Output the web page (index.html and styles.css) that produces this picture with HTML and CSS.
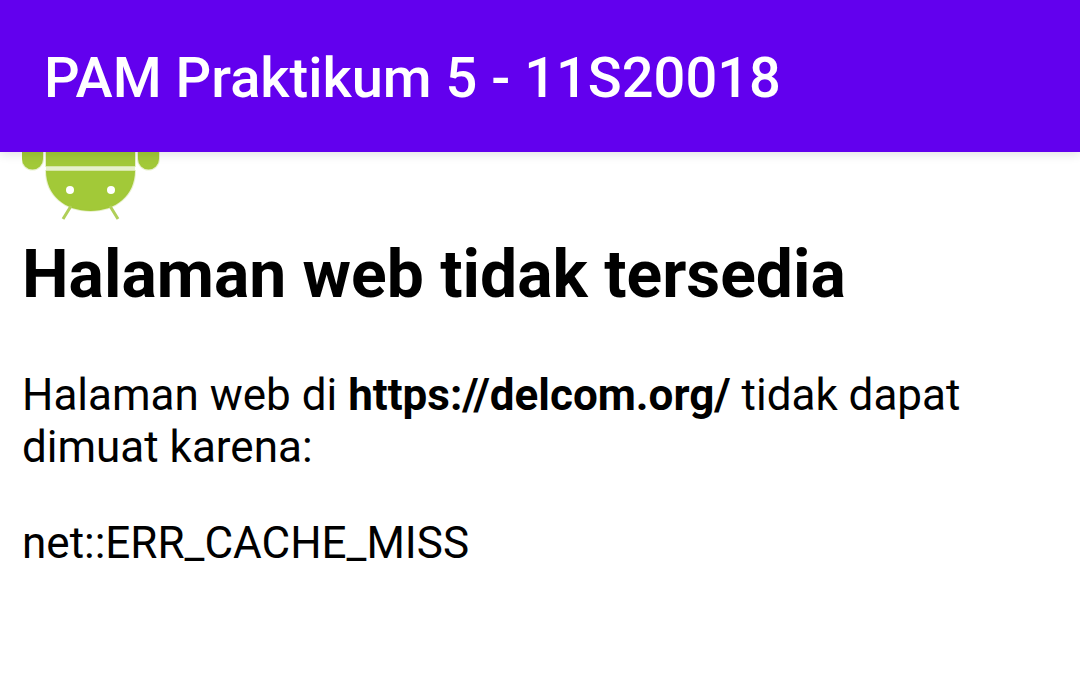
FILE: index.html
```html
<!DOCTYPE html>
<html lang="id">
<head>
<meta charset="utf-8">
<meta name="viewport" content="width=device-width, initial-scale=1">
<title>PAM Praktikum 5 - 11S20018</title>
<link rel="stylesheet" href="styles.css">
</head>
<body>
<header class="app-bar">
  <div class="app-title">PAM Praktikum 5 - 11S20018</div>
</header>
<main class="error-page">
  <svg class="robot" viewBox="22 152 138 70" aria-hidden="true">
    <path class="robot-gap" d="M46 165h89v8H46z"/>
    <path class="robot-body" d="M22 140h21v19a10.500 10.500 0 0 1-21 0zM138 140h21v19a10.500 10.500 0 0 1-21 0zM46 140h89v26H46zM46 171h89c0 24-19 40-44.500 40S46 195 46 171z"/>
    <path class="robot-antenna" d="M71 206l-8 13M110 206l8 13"/>
    <circle class="robot-eye" cx="70" cy="190" r="4"/>
    <circle class="robot-eye" cx="111" cy="190" r="4"/>
  </svg>
  <h1 class="error-title">Halaman web tidak tersedia</h1>
  <p class="error-text">Halaman web di <strong>https://delcom.org/</strong> tidak dapat dimuat karena:</p>
  <p class="error-text">net::ERR_CACHE_MISS</p>
</main>
</body>
</html>
```
FILE: styles.css
```css
body {
  margin: 0;
  background: #fff;
  color: #000;
  font-family: Roboto, sans-serif;
}

.app-bar {
  position: relative;
  padding: 45px 44px 41px;
  background: #6200ee;
  box-shadow: 0 2px 10px rgba(0, 0, 0, 0.12);
}

.app-title {
  color: #fff;
  font-size: 56px;
  font-weight: 500;
  line-height: 66px;
}

.error-page {
  padding: 0 22px;
}

.robot {
  display: block;
  width: 138px;
  height: 70px;
}

.robot-gap {
  fill: #e6f1cb;
}

.robot-body {
  fill: #a2c938;
  stroke: #a2c938;
  stroke-opacity: 0.25;
  stroke-width: 2;
}

.robot-antenna {
  fill: none;
  stroke: #b0cf58;
  stroke-width: 3;
}

.robot-eye {
  fill: #fff;
}

.error-title {
  margin: 14px 0 55px;
  font-size: 66px;
  line-height: 78px;
}

.error-text {
  margin: 0 0 44px;
  font-size: 44px;
  line-height: 52px;
}
```
